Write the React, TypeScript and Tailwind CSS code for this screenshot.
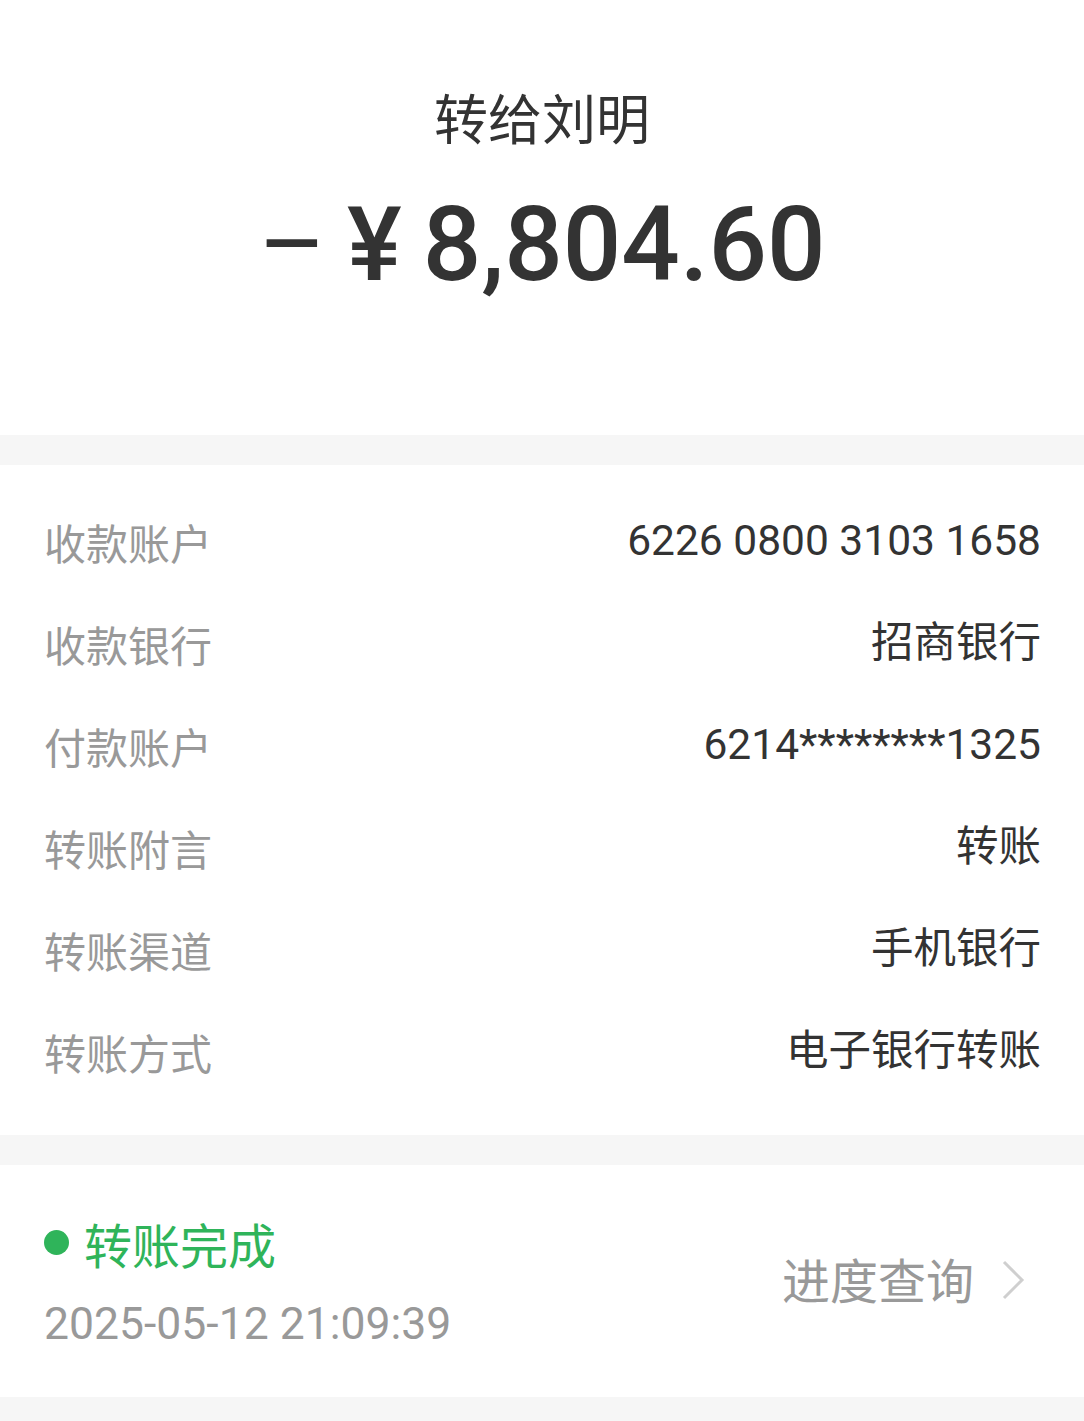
import React from "react";

const rows: [string, string][] = [
  ["收款账户", "6226 0800 3103 1658"],
  ["收款银行", "招商银行"],
  ["付款账户", "6214********1325"],
  ["转账附言", "转账"],
  ["转账渠道", "手机银行"],
  ["转账方式", "电子银行转账"],
];

const font = { fontFamily: 'Roboto, "Noto Sans CJK SC", sans-serif' };
const cjk = { fontFamily: '"Noto Sans CJK SC", sans-serif' };

export default function App() {
  return (
    <div className="w-[1084px] h-[1421px] bg-[#f6f6f6] overflow-hidden" style={font}>
      <div className="bg-white h-[435px] flex flex-col items-center">
        <div className="mt-[85px] text-[54px] leading-[64px] text-[#333]" style={cjk}>
          转给刘明
        </div>
        <div className="mt-[36px] flex items-center text-[#333] font-medium text-[103px] leading-[120px]">
          <span className="mr-[21px] font-normal">–</span>
          <span className="mr-[21px]">¥</span>
          <span>8,804.60</span>
        </div>
      </div>
      <div className="h-[30px]" />
      <div className="bg-white pt-[25px] pb-[33px] pl-[44px] pr-[43px]">
        {rows.map(([k, v]) => (
          <div key={k} className="h-[102px] flex items-center justify-between text-[42px]">
            <span className="text-[#999]" style={cjk}>{k}</span>
            <span className="text-[#333] text-[42.5px]">{v}</span>
          </div>
        ))}
      </div>
      <div className="h-[30px]" />
      <div className="bg-white h-[232px] px-[44px] flex items-center justify-between">
        <div className="flex flex-col">
          <div className="flex items-center mt-[2px]">
            <span className="w-[25px] h-[25px] rounded-full bg-[#2fb45a] mr-[15px]" />
            <span className="text-[48px] leading-[60px] text-[#2fb45a]" style={cjk}>转账完成</span>
          </div>
          <div className="text-[44.5px] leading-[56px] text-[#999] mt-[23px]">2025-05-12 21:09:39</div>
        </div>
        <div className="flex items-center mt-[-6px]">
          <span className="text-[48px] text-[#999]" style={cjk}>进度查询</span>
          <svg width="26" height="42" viewBox="0 0 26 42" className="ml-[26px] mr-[14px] mt-[4px]">
            <path d="M4 3 L22 21 L4 39" fill="none" stroke="#cfcfcf" strokeWidth="3" />
          </svg>
        </div>
      </div>
    </div>
  );
}
